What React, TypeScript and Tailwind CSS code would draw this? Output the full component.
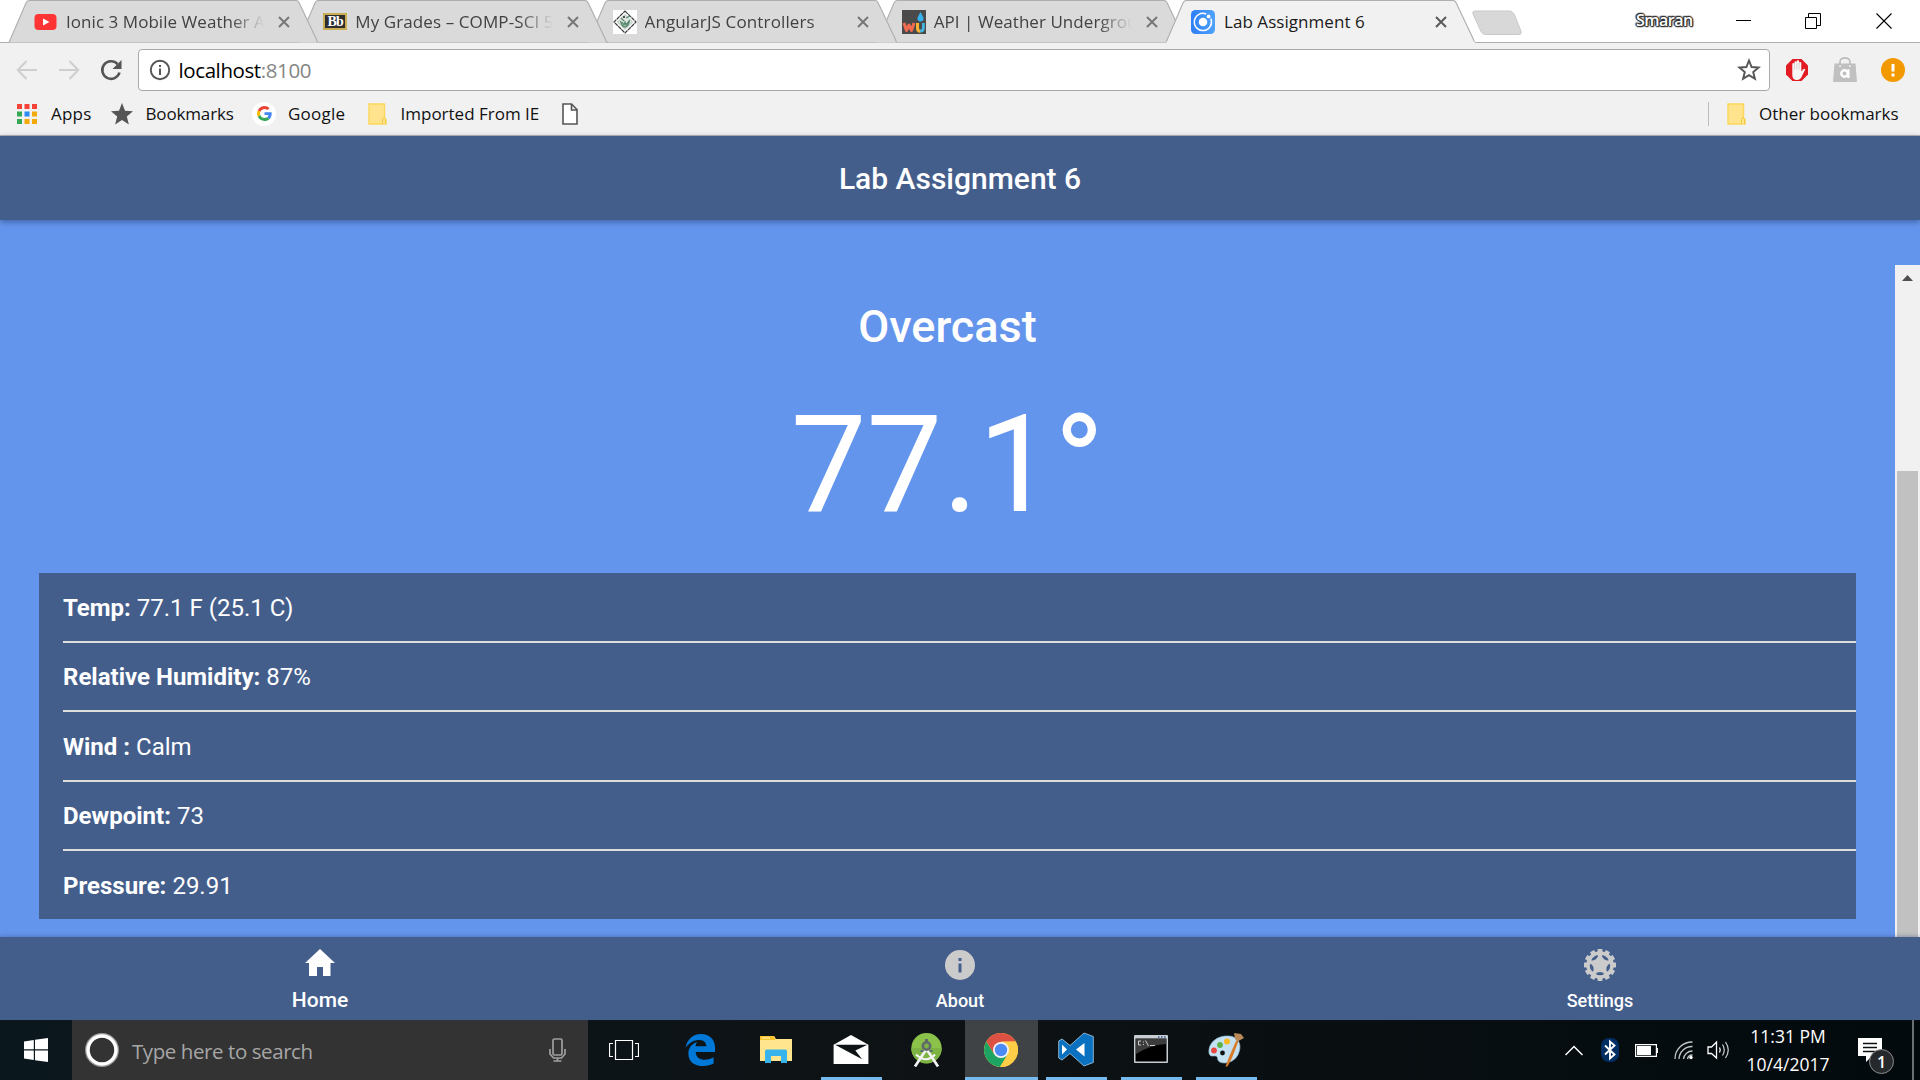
import type { ReactNode } from "react";

const SEGOE = "font-['Open_Sans','Noto_Sans',sans-serif]";

function CloseGlyph({ color = "#6b6b6b" }: { color?: string }) {
  return (
    <svg className="h-[12px] w-[12px] shrink-0" viewBox="0 0 12 12">
      <path d="M1 1 L11 11 M11 1 L1 11" stroke={color} strokeWidth="2" />
    </svg>
  );
}

function YoutubeIcon() {
  return (
    <svg className="h-6 w-6" viewBox="0 0 24 24">
      <rect x="0.5" y="4" width="22" height="16" rx="4" fill="#ff3434" />
      <path d="M9 8.5 L15.5 12 L9 15.5 Z" fill="#fff" />
    </svg>
  );
}

function BlackboardIcon() {
  return (
    <span className="box-border flex h-[17px] w-6 items-center justify-center border-2 border-[#c9ad55] bg-[#2d2d2d] font-['Liberation_Serif',serif] text-[14px] leading-none font-bold tracking-tighter text-white">
      Bb
    </span>
  );
}

function W3Icon() {
  return (
    <svg className="h-6 w-6" viewBox="0 0 24 24">
      <rect width="24" height="24" fill="#fff" />
      <path d="M12 1 L23 12 L12 23 L1 12 Z" fill="#fff" stroke="#3a3a3a" strokeWidth="1.2" strokeDasharray="4 .6" />
      <path d="M12 4.500 L19.500 12 L12 19.500 L4.500 12 Z" fill="#dfe8e2" stroke="#a9c0b2" strokeWidth="1" />
      <path d="M7.500 11 q1.500 6 4.500 6 q4 -1 4.500 -7 M8 8 l3 3 M13 8 l4 -2 M9 12 l2 3 l1 -3 l1 3 l3 -4" fill="none" stroke="#5c8a70" strokeWidth="1.3" />
      <circle cx="11" cy="7" r="1.1" fill="#333" />
    </svg>
  );
}

function WundergroundIcon() {
  return (
    <svg className="h-6 w-6" viewBox="0 0 24 24">
      <rect width="24" height="24" fill="#4a4a4b" />
      <path d="M2 13 L4.500 20.500 L7 15 L9.500 20.500 L12 13" fill="none" stroke="#f26b50" strokeWidth="3" strokeLinejoin="round" />
      <path d="M15.500 13 v5 q0 3.200 2.600 3.200 h.4" fill="none" stroke="#f9b233" strokeWidth="3" />
      <path d="M18 21.200 q3.400 0 3.400 -3.200 v-5" fill="none" stroke="#46b6e0" strokeWidth="2.800" />
      <path d="M18.500 2 q3 5 3 6.500 a3 3 0 0 1 -6 0 q0 -1.500 3 -6.500 Z" fill="#35b3ee" />
    </svg>
  );
}

function IonicIcon() {
  return (
    <svg className="h-6 w-6" viewBox="0 0 24 24">
      <defs>
        <linearGradient id="ionic" x1="0" x2="1">
          <stop offset="0" stopColor="#2f7df8" />
          <stop offset="1" stopColor="#4fa3fb" />
        </linearGradient>
      </defs>
      <rect width="24" height="24" rx="4.500" fill="url(#ionic)" />
      <path d="M15.200 4 A8.600 8.600 0 1 0 19.800 8.500" fill="none" stroke="#fff" strokeWidth="1.500" />
      <circle cx="12" cy="12" r="4.300" fill="#fff" />
      <circle cx="17.600" cy="6.400" r="1.900" fill="#fff" />
    </svg>
  );
}

type TabProps = { icon: ReactNode; title: string; active?: boolean; layer: string; spacing: string };

function Tab({ icon, title, active, layer, spacing }: TabProps) {
  return (
    <div className={`relative -mr-[21px] flex h-[43px] w-[310.25px] shrink-0 items-center pl-[26px] ${layer}`}>
      <svg className="absolute inset-0 h-[43px] w-full" viewBox="0 0 310 43" preserveAspectRatio="none">
        <path
          d="M1 42.500 L18 3 Q19.200 .5 21.500 .5 H287.500 Q290 .5 291 3 L308 39 Q309 42.500 310.500 42.500"
          fill={active ? "#f1f1f1" : "#dadada"}
          stroke="#aeaeae"
          strokeWidth="1.100"
        />
        {active && <path d="M1.500 42.500 H310" stroke="#f1f1f1" strokeWidth="1.600" />}
      </svg>
      <span className="relative flex w-8 items-center">{icon}</span>
      <span
        className={`relative w-[200px] text-[17px] leading-6 whitespace-nowrap ${spacing} ${
          active ? "pl-px text-[#1a1a1a]" : "text-[#424242] [mask-image:linear-gradient(to_right,#000_82%,transparent_99%)]"
        }`}
      >
        {title}
      </span>
      <span className="relative ml-[12px] flex">
        <CloseGlyph color={active ? "#5a5a5a" : "#777"} />
      </span>
    </div>
  );
}

function TabStrip() {
  return (
    <div className="flex h-[43px] bg-white pl-[8px] shadow-[inset_0_-1px_0_#aeaeae]">
      <Tab icon={<YoutubeIcon />} title="Ionic 3 Mobile Weather A" layer="z-[4]" spacing="tracking-[0.05px]" />
      <Tab icon={<BlackboardIcon />} title="My Grades – COMP-SCI 5" layer="z-[3]" spacing="tracking-[0.1px]" />
      <Tab icon={<W3Icon />} title="AngularJS Controllers" layer="z-[2]" spacing="tracking-[0.13px]" />
      <Tab icon={<WundergroundIcon />} title="API | Weather Undergrou" layer="z-[1]" spacing="tracking-[0.05px]" />
      <Tab icon={<IonicIcon />} title="Lab Assignment 6" active layer="z-[5]" spacing="tracking-[0.05px]" />
      <svg className="mt-[10px] ml-[17px] h-[26px] w-[52px]" viewBox="0 0 52 26">
        <path d="M4 1 H38 Q41.500 1 43 4 L50 21 Q51 24.500 48 24.500 H15 Q11.500 24.500 10 21.500 L2 4 Q1 1 4 1 Z" fill="#d8d8d8" stroke="#c9c9c9" strokeWidth="1" />
      </svg>
      <div className="mr-[28px] ml-auto flex h-[41px] items-center">
        <span className="mr-[42px] mb-[2px] w-[58px] text-[16px] leading-none font-semibold tracking-[-0.5px] whitespace-nowrap text-white [text-shadow:1px_0_1px_#333,-1px_0_1px_#333,0_1px_1px_#333,0_-1px_1px_#333,1px_1px_1px_#333,-1px_-1px_1px_#333,0_0_2px_#333,0_0_2px_#333]">
          Smaran
        </span>
        <svg className="mr-[53px] h-4 w-4" viewBox="0 0 16 16">
          <path d="M0 7.500 H15" stroke="#000" />
        </svg>
        <svg className="mr-[55px] h-4 w-4" viewBox="0 0 16 16">
          <path d="M.5 4.500 H11.500 V15.500 H.5 Z M3.500 4 V.5 H15.500 V12.500 H12" fill="none" stroke="#000" />
        </svg>
        <svg className="h-4 w-4" viewBox="0 0 16 16">
          <path d="M.5 .5 L15.500 15.500 M15.500 .5 L.5 15.500" stroke="#000" strokeWidth="1.100" />
        </svg>
      </div>
    </div>
  );
}

function AddressRow() {
  return (
    <div className="flex h-[54px] items-center pl-[16px]">
      <svg className="mr-[20px] h-[22px] w-[22px]" viewBox="0 0 22 22">
        <path d="M21 11 H2 M10.500 2 L1.800 11 L10.500 20" fill="none" stroke="#cfcfcf" strokeWidth="2" />
      </svg>
      <svg className="mr-[19px] h-[22px] w-[22px]" viewBox="0 0 22 22">
        <path d="M1 11 H20 M11.500 2 L20.200 11 L11.500 20" fill="none" stroke="#cfcfcf" strokeWidth="2" />
      </svg>
      <svg className="mr-[15px] h-6 w-6" viewBox="0 0 24 24">
        <path d="M20.500 14.500 A8.800 8.800 0 1 1 18.500 6" fill="none" stroke="#555" strokeWidth="2.600" />
        <path d="M22.500 2 V11 H13.500 Z" fill="#555" />
      </svg>
      <div className="flex h-[42px] w-[1632px] items-center rounded-[4px] border border-[#a9a9a9] bg-white pl-[10px]">
        <svg className="h-[22px] w-[22px]" viewBox="0 0 22 22">
          <circle cx="11" cy="11" r="9.200" fill="none" stroke="#555" strokeWidth="1.900" />
          <path d="M11 9.600 V16 M11 6 V8" stroke="#555" strokeWidth="2" />
        </svg>
        <span className="mt-px ml-[7.500px] text-[20.500px] leading-none tracking-[-0.400px] text-black">
          localhost<span className="text-[#858585]">:8100</span>
        </span>
        <svg className="mr-[8px] ml-auto h-6 w-6" viewBox="0 0 24 24">
          <path d="M12 2.500 L14.600 9 L21.600 9.500 L16.200 14 L17.900 20.800 L12 17.100 L6.100 20.800 L7.800 14 L2.400 9.500 L9.400 9 Z" fill="none" stroke="#555" strokeWidth="1.900" />
        </svg>
      </div>
      <svg className="ml-[15px] h-6 w-6" viewBox="0 0 24 24">
        <path d="M7.500 1 H16.500 L23 7.500 V16.500 L16.500 23 H7.500 L1 16.500 V7.500 Z" fill="#e31b23" />
        <path d="M7.300 14 V6.200 a1.100 1.100 0 0 1 2.200 0 V4.300 a1.100 1.100 0 0 1 2.300 0 V3.500 a1.100 1.100 0 0 1 2.300 0 V5 a1.100 1.100 0 0 1 2.200 0 V13.500 L18.500 11 q1.200 -.8 1.800 .3 L17 18 q-1.500 4 -5 4 q-4.700 0 -4.700 -5 Z" fill="#f7f7f7" />
        <path d="M9.500 6 V11.500 M11.800 5 V11.500 M14.100 5 V11.500" stroke="#cfa9a9" strokeWidth=".5" />
      </svg>
      <svg className="ml-[24px] h-[26px] w-6" viewBox="0 0 24 26">
        <path d="M1.500 6.500 H22.500 L24 25 H0 Z" fill="#c0c0c0" />
        <path d="M7 9 V5 q0 -4 5 -4 t5 4 V9" fill="none" stroke="#b5b5b5" strokeWidth="1.400" />
        <circle cx="7" cy="9" r="1.100" fill="#eee" />
        <circle cx="17" cy="9" r="1.100" fill="#eee" />
        <circle cx="11.500" cy="16.500" r="3.200" fill="none" stroke="#fff" strokeWidth="2.400" />
        <path d="M15.400 12.300 V21" stroke="#fff" strokeWidth="2.300" />
      </svg>
      <svg className="ml-[24px] h-6 w-6" viewBox="0 0 24 24">
        <circle cx="12" cy="12" r="12" fill="#f29900" />
        <path d="M12 6 V13.500 M12 15.500 V18.500" stroke="#fff" strokeWidth="3" />
      </svg>
    </div>
  );
}

function FolderIcon() {
  return (
    <svg className="h-[22px] w-[19px]" viewBox="0 0 19 22">
      <path d="M1 1 H16.500 V15 L18 16.500 V21 H1 Z" fill="#ffe48d" stroke="#fbd75b" strokeWidth="1.400" />
      <path d="M14.500 21 V16.500 q0 -1.500 1.500 -1.500 t1.500 1.500 V21" fill="#ffe48d" stroke="#f3c93f" />
    </svg>
  );
}

const appDots = ["#f44336", "#f44336", "#f44336", "#34a853", "#2a8bf2", "#f4a90b", "#34a853", "#f4a90b", "#f4a90b"];

function BookmarksBar() {
  return (
    <div className="flex h-[39px] items-center border-b border-[#b5b5b5] pb-[5px] pl-[17px] text-[17px] leading-none whitespace-nowrap text-[#111]">
      <svg className="h-5 w-5" viewBox="0 0 20 20">
        {appDots.map((c, i) => (
          <rect key={i} x={(i % 3) * 7.5} y={Math.floor(i / 3) * 7.5} width="5" height="5" fill={c} />
        ))}
      </svg>
      <span className="ml-[14px] w-[60px] tracking-[0.2px]">Apps</span>
      <svg className="h-[22px] w-[22px]" viewBox="0 0 22 22">
        <path d="M11 0 L14 7.800 L22 8.200 L15.800 13.400 L17.900 21.500 L11 17 L4.100 21.500 L6.200 13.400 L0 8.200 L8 7.800 Z" fill="#555" />
      </svg>
      <span className="ml-[12.500px] w-[106.500px] tracking-[-0.15px]">Bookmarks</span>
      <span className="flex h-6 w-6 items-center justify-center rounded-full bg-white">
        <svg className="h-[15px] w-[15px]" viewBox="0 0 48 48">
          <path fill="#EA4335" d="M24 9.500c3.540 0 6.710 1.220 9.210 3.600l6.850-6.850C35.900 2.380 30.470 0 24 0 14.620 0 6.510 5.380 2.560 13.220l7.980 6.190C12.430 13.720 17.740 9.500 24 9.500z" />
          <path fill="#4285F4" d="M46.980 24.550c0-1.570-.15-3.090-.38-4.550H24v9.020h12.940c-.58 2.960-2.260 5.480-4.780 7.180l7.730 6c4.510-4.180 7.090-10.360 7.090-17.650z" />
          <path fill="#FBBC05" d="M10.530 28.590c-.48-1.450-.76-2.990-.76-4.590s.27-3.140.76-4.590l-7.980-6.190C.92 16.460 0 20.120 0 24c0 3.880.92 7.540 2.560 10.780l7.970-6.190z" />
          <path fill="#34A853" d="M24 48c6.480 0 11.930-2.130 15.890-5.810l-7.730-6c-2.150 1.450-4.920 2.300-8.160 2.300-6.260 0-11.570-4.220-13.470-9.910l-7.980 6.190C6.510 42.620 14.620 48 24 48z" />
        </svg>
      </span>
      <span className="ml-[12px] w-[80px] tracking-[0.25px]">Google</span>
      <FolderIcon />
      <span className="ml-[13.500px] w-[161.500px] tracking-[0px]">Imported From IE</span>
      <svg className="h-[22px] w-4" viewBox="0 0 16 22">
        <path d="M1 1 H9.500 L15 6.500 V21 H1 Z M9.500 1 V7 H15" fill="#fff" stroke="#555" strokeWidth="1.600" />
      </svg>
      <div className="mr-[21px] ml-auto flex items-center">
        <span className="h-6 w-px bg-[#bdbdbd]" />
        <span className="mr-[13px] ml-[18px]">
          <FolderIcon />
        </span>
        <span className="w-[140px] tracking-[0px]">Other bookmarks</span>
      </div>
    </div>
  );
}

const readings = [
  { label: "Temp:", value: "77.1 F (25.1 C)", row: "h-[70px] border-b-2" },
  { label: "Relative Humidity:", value: "87%", row: "h-[69px] border-b-2 pb-px" },
  { label: "Wind :", value: "Calm", row: "h-[70px] border-b-2" },
  { label: "Dewpoint:", value: "73", row: "h-[69px] border-b-2 pb-px" },
  { label: "Pressure:", value: "29.91", row: "h-[68px]" },
];

function WeatherPage() {
  return (
    <main className="flex h-[717px] overflow-hidden bg-[#6495ed]">
      <div className="flex w-[1895px] flex-col items-center pt-[84px] text-white">
        <h2 className="text-[45px] leading-none font-medium">Overcast</h2>
        <div className="mt-[49px] text-[135px] leading-none">77.1°</div>
        <div className="mt-[40px] ml-[39px] w-[1817px] self-start bg-[#445e8c] pl-6">
          {readings.map((r) => (
            <div key={r.label} className={`flex items-center gap-[6px] border-[#dedede] pt-[2px] text-[24px] leading-none whitespace-nowrap ${r.row}`}>
              <b className="font-bold">{r.label}</b>
              <span>{r.value}</span>
            </div>
          ))}
        </div>
      </div>
      <div className="mt-[45px] flex w-[25px] flex-col items-center bg-[#f1f1f1]">
        <svg className="mt-[10px] h-[6px] w-[11px]" viewBox="0 0 11 6">
          <path d="M0 6 L5.500 0 L11 6 Z" fill="#505050" />
        </svg>
        <div className="mt-[190px] w-[21px] flex-1 bg-[#c1c1c1]" />
      </div>
    </main>
  );
}

function GearIcon() {
  const teeth = Array.from({ length: 12 }, (_, i) => i * 30);
  const slots = [0, 72, 144, 216, 288];
  return (
    <svg className="h-8 w-8" viewBox="-16 -16 32 32">
      <circle r="13.700" fill="#cbcbcb" />
      {teeth.map((a) => (
        <rect key={a} x="-2.400" y="-16" width="4.800" height="5" rx=".6" fill="#cbcbcb" transform={`rotate(${a})`} />
      ))}
      {slots.map((a) => (
        <path key={a} d="M-4.200 9 Q-3 7 0 7 T4.200 9 Q2.500 10.300 0 10.300 T-4.200 9 Z" fill="#445e8c" transform={`rotate(${a})`} />
      ))}
    </svg>
  );
}

function TabBar() {
  return (
    <nav className="relative grid h-[83px] grid-cols-3 bg-[#445e8c] font-medium text-white shadow-[0_-1px_4px_rgba(40,60,110,.35)]">
      <div className="flex flex-col items-center pt-[12px]">
        <svg className="h-[27px] w-[30px]" viewBox="0 0 30 27">
          <path d="M15 0 L30 14 H25.500 V27 H18 V18 H12 V27 H4 V14 H0 Z" fill="#fff" />
        </svg>
        <span className="mt-[14px] text-[21px] leading-none">Home</span>
      </div>
      <div className="flex flex-col items-center pt-[13px]">
        <svg className="h-[30px] w-[30px]" viewBox="0 0 30 30">
          <circle cx="15" cy="15" r="15" fill="#cbcbcb" />
          <path d="M15 13.500 V22.500 M15 8 V11" stroke="#445e8c" strokeWidth="3" />
        </svg>
        <span className="mt-[12px] text-[18px] leading-none">About</span>
      </div>
      <div className="flex flex-col items-center pt-[12px]">
        <GearIcon />
        <span className="mt-[11px] text-[18px] leading-none">Settings</span>
      </div>
    </nav>
  );
}

function TaskCell({ width, bar, active, children }: { width: string; bar?: boolean; active?: boolean; children: ReactNode }) {
  return (
    <div className={`flex h-[60px] shrink-0 flex-col items-center ${width} ${active ? "bg-[#3f4345]" : ""}`}>
      <div className="flex h-[57px] items-center pt-[2px] pr-[2px]">{children}</div>
      {bar && <div className={`h-[3px] bg-[#76b9ed] ${active ? "w-full" : "w-[61px]"}`} />}
    </div>
  );
}

function Taskbar() {
  return (
    <footer className="flex h-[60px] bg-gradient-to-r from-[#0a171c] via-[#0e1214] to-[#030a0d] text-white">
      <div className="flex w-[72px] items-center pl-6">
        <svg className="h-6 w-6" viewBox="0 0 24 24">
          <path d="M0 3.400 L9.800 2 V11.300 H0 Z M11 1.800 L24 0 V11.300 H11 Z M0 12.600 H9.800 V22 L0 20.600 Z M11 12.600 H24 V24 L11 22.200 Z" fill="#fff" />
        </svg>
      </div>
      <div className="flex w-[516px] items-center bg-[#333] pl-[13px]">
        <svg className="h-[34px] w-[34px]" viewBox="0 0 34 34">
          <circle cx="17" cy="17" r="14.700" fill="none" stroke="#9a9a9a" strokeWidth="4.500" />
          <circle cx="17" cy="17" r="14" fill="none" stroke="#fff" strokeWidth="3.400" />
        </svg>
        <span className="mt-[2px] ml-[13px] text-[20.500px] leading-none tracking-[-0.42px] whitespace-nowrap text-[#a6a6a6]">Type here to search</span>
        <svg className="mr-[22px] ml-auto h-6 w-[17px]" viewBox="0 0 17 24">
          <rect x="4" y="1" width="9" height="16" rx="1.500" fill="none" stroke="#a0a0a0" strokeWidth="1.700" />
          <path d="M1 11 V16 L4.500 20 H12.500 L16 16 V11 M8.500 20 V23 M4.500 23 H12.500" fill="none" stroke="#a0a0a0" strokeWidth="1.700" />
        </svg>
      </div>
      <TaskCell width="w-[73px]">
        <svg className="h-[20px] w-[30px]" viewBox="0 0 30 20">
          <path d="M6.500 .5 H23.500 V19.500 H6.500 Z M4 3.500 H.5 V16.500 H4 M26 3.500 H29.500 V16.500 H26" fill="none" stroke="#fff" strokeWidth="1.200" />
        </svg>
      </TaskCell>
      <TaskCell width="w-[80px]">
        <svg className="h-[32px] w-[31px]" viewBox="0 0 31 33">
          <path d="M0 14.500 C2 4 9 0 16 0 C25 0 30.500 6 30.500 14 V18.500 H10.500 C11 24.500 15 26.500 20 26.500 C23.500 26.500 26.500 25.500 29 24 V30.500 C26 32.300 22.500 33 18.500 33 C9 33 3 28.500 3 20 C3 14.500 6.500 10.200 12 8 C11 9.500 10.500 11 10.400 12.700 H21.500 C21.500 9.200 19 6.300 14.500 6.300 C8.500 6.300 4 9 0 14.500 Z" fill="#0078d7" />
        </svg>
      </TaskCell>
      <TaskCell width="w-[72px]">
        <svg className="h-[27px] w-8" viewBox="0 0 32 27">
          <path d="M0 0 H14 L16 3 H32 V25 H0 Z" fill="#ffe68e" />
          <path d="M0 0 H14 L15.500 4 H0 Z" fill="#fbc52e" />
          <path d="M2 2 H10" stroke="#fff3c4" />
          <path d="M5 15 Q5 13.500 6.500 13.500 H25.500 Q27 13.500 27 15 V27 H21 V20 H11 V27 H5 Z" fill="#39b4ea" />
        </svg>
      </TaskCell>
      <TaskCell width="w-[77px]" bar>
        <svg className="h-[29px] w-9" viewBox="0 0 36 30">
          <path d="M18 0 L36 10 V30 H0 V10 Z" fill="#fff" />
          <path d="M1.500 10 H35 L22.500 16 L29.500 25 L1.500 10 Z" fill="#0e1316" />
        </svg>
      </TaskCell>
      <TaskCell width="w-[75px]">
        <svg className="h-[34px] w-[31px]" viewBox="0 0 31 34">
          <circle cx="15.500" cy="15.200" r="15.200" fill="#8bc34a" />
          <path d="M.3 15 A15.200 15.200 0 0 0 30.700 15 Z" fill="#7cb342" />
          <path d="M15.500 16 L4 33.500 M15.500 16 L27 33.500" stroke="#f2f2f2" strokeWidth="2.700" />
          <path d="M5 21.500 Q15.500 31 24 21.500" fill="none" stroke="#f2f2f2" strokeWidth="2.200" />
          <circle cx="15.500" cy="13" r="3.700" fill="#7cb342" stroke="#606a6b" strokeWidth="2.600" />
          <path d="M15.500 6 V10 M11 17 V19 M20 17 V19" stroke="#606a6b" strokeWidth="3" />
        </svg>
      </TaskCell>
      <TaskCell width="w-[73px]" bar active>
        <svg className="h-[34px] w-[34px]" viewBox="-17 -17 34 34">
          <circle r="17" fill="#ffcd46" />
          <path d="M-14.700 -8.500 A17 17 0 0 1 14.700 -8.500 L0 -8 L-7 4 Z" fill="#dd5144" />
          <path d="M-14.700 -8.500 A17 17 0 0 0 -1 16.970 L7 4 L0 8 L-7 4 Z" fill="#1da462" />
          <path d="M14.700 -8.500 H0 L7 4 L-1 16.970 A17 17 0 0 0 14.700 -8.500 Z" fill="#ffcd46" />
          <circle r="8" fill="#f4f4f4" />
          <circle r="6.200" fill="#4c8bf5" />
        </svg>
      </TaskCell>
      <TaskCell width="w-[77px]" bar>
        <svg className="h-[35px] w-9" viewBox="0 0 36 35">
          <path d="M26 1 L35.300 4.500 V30.500 L26 34 L12 21.500 L4 28 L.7 26 V9 L4 7 L12 13.500 Z" fill="#0a70c0" stroke="#a9cfea" strokeWidth=".8" />
          <path d="M26.500 11 L18 17.500 L26.500 24.500 Z M4 12.500 V22.500 L9 17.500 Z" fill="#fff" />
        </svg>
      </TaskCell>
      <TaskCell width="w-[73px]" bar>
        <svg className="mb-[2px] h-[28px] w-[34px]" viewBox="0 0 34 28">
          <rect width="34" height="28" rx="1" fill="#c9ced3" />
          <rect x="1.500" y="3.500" width="31" height="23" fill="#000" />
          <path d="M2 4 H32 V9 Q16 10 2 19 Z" fill="#3c3c3c" />
          <path d="M24 2 h1.500 M27 2 h1.500 M30 2 h1.500" stroke="#3c5f9b" strokeWidth="1.600" />
          <path d="M7 6 H4.500 V10 H7 M9.500 6.500 v1 M9.500 9 v1 M11.500 5.500 L14.500 11 M16 10.500 H21" fill="none" stroke="#ccc" strokeWidth="1" />
        </svg>
      </TaskCell>
      <TaskCell width="w-[77px]" bar>
        <svg className="h-[35px] w-9" viewBox="0 0 36 35">
          <path d="M1 21 C0 10 10 3.500 20 4 C30 4 34 12 31 20 C29 28 20 32.500 13 30.500 C8 29 11 25 8 24 C5 23.500 2 25.500 1 21 Z" fill="#c5e2f3" stroke="#8fb9d5" strokeWidth=".7" />
          <circle cx="14.500" cy="21" r="2.400" fill="#0d1214" />
          <circle cx="6" cy="18.500" r="2.900" fill="#e9473f" />
          <circle cx="12" cy="13" r="2.900" fill="#5cb245" />
          <circle cx="19" cy="9.500" r="3" fill="#f8b820" />
          <path d="M28 9 L21 25 L17.500 34.500 L19.500 34.500 L24 26 L30.500 9 Z" fill="#d97b27" />
          <path d="M26 1 L33 2 L36 6 L29.500 9.500 L27 7 Z" fill="#b98a58" />
        </svg>
      </TaskCell>
      <div className="ml-auto flex items-center">
        <svg className="mr-[18px] h-[11px] w-[18px]" viewBox="0 0 18 11">
          <path d="M.5 10 L9 1.500 L17.500 10" fill="none" stroke="#fff" strokeWidth="1.500" />
        </svg>
        <svg className="mr-[16px] h-6 w-[18px]" viewBox="0 0 18 24">
          <rect width="18" height="24" rx="8" fill="#002e63" />
          <path d="M4 7.500 L13.500 16.500 L9 20.500 V3.500 L13.500 7.500 L4 16.500" fill="none" stroke="#fff" strokeWidth="1.900" />
        </svg>
        <svg className="mr-[16px] h-[13px] w-[23px]" viewBox="0 0 23 13">
          <path d="M.6 .6 H21.400 V12.400 H.6 Z" fill="none" stroke="#fff" strokeWidth="1.200" />
          <path d="M2 2 H16 V11 H2 Z M21.500 4 H23 V9 H21.500 Z" fill="#fff" />
        </svg>
        <svg className="mr-[13px] h-5 w-5" viewBox="0 0 20 20">
          <path d="M1 19 A17 17 0 0 1 18.500 2 M5 19 A13 13 0 0 1 18.500 6.500 M9.500 19 A9 9 0 0 1 18.500 11 M13.500 19 A5 5 0 0 1 18.500 15" fill="none" stroke="#c4c8c9" strokeWidth="1.300" />
          <circle cx="17" cy="17.500" r="1.700" fill="#fff" />
        </svg>
        <svg className="mr-[16px] h-5 w-[23px]" viewBox="0 0 23 20">
          <path d="M1 7 H4.500 L9.500 2 V18 L4.500 13.500 H1 Z M12.500 7.500 Q14 10 12.500 12.500" fill="none" stroke="#fff" strokeWidth="1.300" />
          <path d="M15.500 4.500 Q19 10 15.500 15.500 M18.500 2 Q24 10 18.500 18" fill="none" stroke="#cfd2d3" strokeWidth="1.200" />
        </svg>
        <div className="flex w-[84px] flex-col items-center text-[17.500px] leading-[28px] whitespace-nowrap">
          <span className="tracking-[0px]">11:31 PM</span>
          <span className="tracking-[0px]">10/4/2017</span>
        </div>
        <div className="relative mt-[12px] ml-[28px] h-[36px] w-[37px]">
          <svg className="h-[25px] w-6" viewBox="0 0 24 25">
            <path d="M0 0 H24 V18 H14 L8 24 V18 H0 Z" fill="#fff" />
            <path d="M5 5.500 H19 M5 9.500 H19 M5 13.500 H19" stroke="#0a1013" strokeWidth="1.300" />
          </svg>
          <span className="absolute top-[11px] left-[11px] flex h-[25px] w-[25px] items-center justify-center rounded-full border border-[#8a8a8a] bg-[#26292b] text-[16px] leading-none font-semibold">
            1
          </span>
        </div>
        <span className="mr-[6px] ml-[17px] h-[60px] w-[2px] bg-[#6b7072]" />
      </div>
    </footer>
  );
}

export default function App() {
  return (
    <div className="flex h-[1080px] w-[1920px] flex-col overflow-hidden">
      <header className={`bg-[#f1f1f1] ${SEGOE}`}>
        <TabStrip />
        <AddressRow />
        <BookmarksBar />
      </header>
      <section className="font-['Roboto',sans-serif]">
        <div className="relative flex h-[84px] items-center justify-center bg-[#445e8c] pt-px text-[30px] leading-none font-medium text-white shadow-[0_2px_6px_rgba(30,50,100,.5)]">
          Lab Assignment 6
        </div>
        <WeatherPage />
        <TabBar />
      </section>
      <div className={SEGOE}>
        <Taskbar />
      </div>
    </div>
  );
}
